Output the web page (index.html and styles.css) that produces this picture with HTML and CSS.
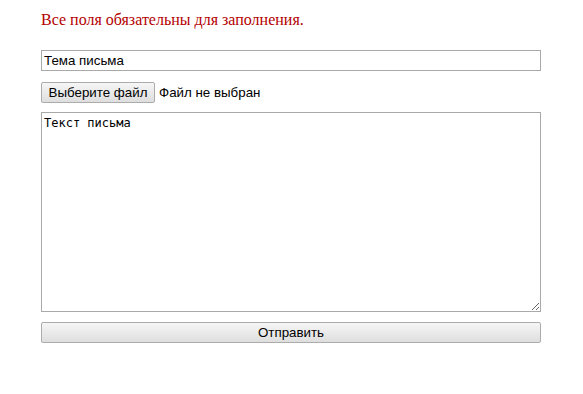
FILE: index.html
```html
<!DOCTYPE html>
<html lang="ru">
<head>
  <meta charset="UTF-8">
  <title>Обратная связь</title>
  <link rel="stylesheet" href="styles.css">
</head>
<body>
  <form class="mail-form">
    <p class="notice">Все поля обязательны для заполнения.</p>

    <input class="subject" type="text" value="Тема письма">

    <div class="file-row">
      <button type="button" class="btn file-btn">Выберите файл</button>
      <span class="file-name">Файл не выбран</span>
    </div>

    <textarea class="message">Текст письма</textarea>

    <button type="button" class="btn send">Отправить</button>
  </form>
</body>
</html>
```

FILE: styles.css
```css
body {
  margin: 0;
  background: #fff;
  font-family: "Liberation Sans", Arial, sans-serif;
}

.mail-form {
  width: 500px;
  padding: 0 0 0 41px;
  display: flex;
  flex-direction: column;
}

.notice {
  margin: 11px 0 21px;
  color: #b40000;
  font-family: "Liberation Serif", "Times New Roman", serif;
  font-size: 16px;
  line-height: 18px;
}

.subject {
  box-sizing: border-box;
  width: 500px;
  height: 21px;
  margin: 0;
  padding: 1px 2px;
  border: 1px solid #a9a9a9;
  font-family: "Liberation Sans", Arial, sans-serif;
  font-size: 13.33px;
  color: #000;
  outline: none;
}

.file-row {
  display: flex;
  align-items: center;
  gap: 4px;
  margin-top: 11px;
  font-size: 13.33px;
}

.btn {
  box-sizing: border-box;
  height: 21px;
  margin: 0;
  padding: 0 6px;
  border: 1px solid #acacac;
  border-radius: 2px;
  background: linear-gradient(#f6f6f6, #dedede);
  font-family: "Liberation Sans", Arial, sans-serif;
  font-size: 13.33px;
  color: #000;
}

.file-btn {
  width: 114px;
}

.message {
  box-sizing: border-box;
  width: 500px;
  height: 200px;
  margin: 9px 0 0;
  padding: 3px 2px;
  border: 1px solid #a9a9a9;
  font-family: "DejaVu Sans Mono", monospace;
  font-size: 12px;
  line-height: 15px;
  resize: both;
  outline: none;
}

.send {
  width: 500px;
  margin-top: 10px;
  height: 21px;
}
```
